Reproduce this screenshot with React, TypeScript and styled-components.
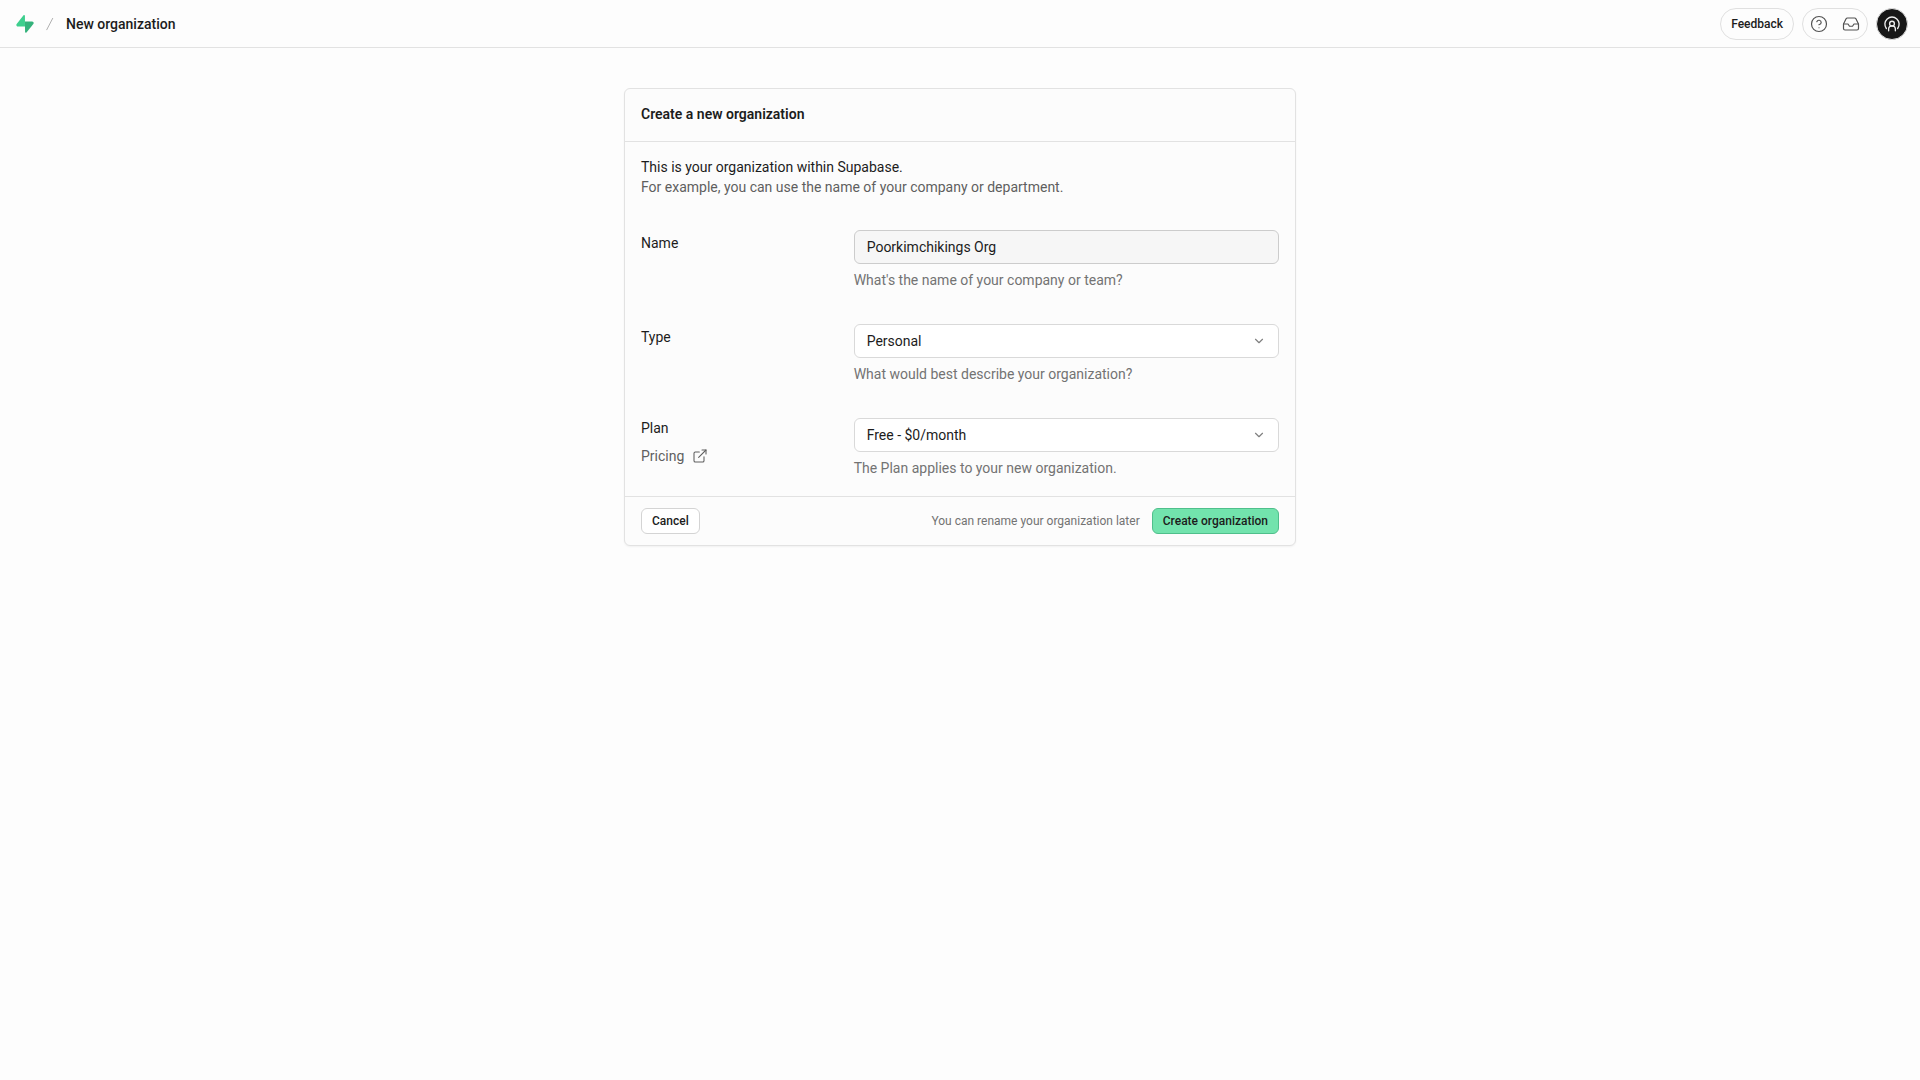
import React from "react";
import styled, { createGlobalStyle, css } from "styled-components";
import { ChevronDown, ExternalLink, CircleHelp, Inbox } from "lucide-react";

const GlobalStyle = createGlobalStyle`
  *, *::before, *::after { box-sizing: border-box; }
  body {
    margin: 0;
    background: #fdfdfd;
    color: #1c1c1c;
    font: 400 14px/20px Roboto, "Liberation Sans", sans-serif;
  }
  button, input, select { font: inherit; color: inherit; }
  h1, h2, p { margin: 0; font: inherit; }
`;

const TopBar = styled.header`
  display: flex;
  align-items: center;
  justify-content: space-between;
  height: 48px;
  padding: 0 12px 0 16px;
  border-bottom: 1px solid #e2e2e2;
`;

const Group = styled.div<{ $gap: number }>`
  display: flex;
  align-items: center;
  gap: ${({ $gap }) => $gap}px;
`;

const HomeLink = styled.a`
  display: flex;
`;

const PageTitle = styled.h1`
  && { font-weight: 500; }
`;

const pill = css`
  height: 32px;
  border: 1px solid #e0e0e0;
  border-radius: 16px;
  background: #fdfdfd;
`;

const FeedbackButton = styled.button`
  ${pill}
  padding: 0 10px;
  font-size: 12px;
  font-weight: 500;
`;

const IconPill = styled.div`
  ${pill}
  display: flex;
  overflow: hidden;
`;

const IconButton = styled.button`
  display: grid;
  place-items: center;
  width: 32px;
  padding: 0;
  border: 0;
  background: none;
  color: #525252;
`;

const Avatar = styled.button`
  display: grid;
  place-items: center;
  width: 32px;
  height: 32px;
  padding: 0;
  border: 1px solid #e0e0e0;
  border-radius: 50%;
  background: #171717;
  color: #ededed;
`;

const Main = styled.main`
  padding: 40px 16px;
`;

const Card = styled.form`
  max-width: 672px;
  margin: 0 auto;
  border: 1px solid #e2e2e2;
  border-radius: 6px;
  background: #fcfcfc;
  box-shadow: 0 1px 2px rgba(0, 0, 0, 0.05);
`;

const CardHeader = styled.div`
  padding: 15px 16px 17px;
  border-bottom: 1px solid #e2e2e2;
`;

const CardTitle = styled.h2`
  && { font-weight: 600; }
`;

const CardBody = styled.div`
  display: flex;
  flex-direction: column;
  gap: 33px;
  padding: 15px 16px 17px;
`;

const Muted = styled.p`
  color: #5f5f5f;
`;

const Row = styled.div`
  display: grid;
  grid-template-columns: 1fr 2fr;
`;

const LabelCell = styled.div<{ $tight?: boolean }>`
  display: flex;
  flex-direction: column;
  align-items: flex-start;
  gap: 8px;
  padding-top: ${({ $tight }) => ($tight ? 0 : 3)}px;
`;

const PricingLink = styled.a`
  display: flex;
  align-items: center;
  gap: 8px;
  color: #5f5f5f;
  text-decoration: none;
`;

const ControlCell = styled.div`
  display: flex;
  flex-direction: column;
  gap: 7px;
  padding-bottom: 2px;
`;

const control = css`
  width: 100%;
  height: 34px;
  padding: 0 12px;
  border: 1px solid #d9d9d9;
  border-radius: 6px;
  outline: none;
`;

const TextInput = styled.input`
  ${control}
  border-color: #cccccc;
  background: #f6f6f6;
`;

const SelectWrap = styled.div`
  display: grid;
  align-items: center;

  > * { grid-area: 1 / 1; }
  > svg {
    justify-self: end;
    margin-right: 13px;
    color: #808080;
    pointer-events: none;
  }
`;

const Select = styled.select`
  ${control}
  appearance: none;
  background: #ffffff;
`;

const Hint = styled.p`
  && { line-height: 18px; }
  color: #737373;
`;

const CardFooter = styled.div`
  display: flex;
  align-items: center;
  justify-content: space-between;
  padding: 11px 16px;
  border-top: 1px solid #e2e2e2;
`;

const FooterNote = styled.p`
  && { font-size: 12px; }
  color: #737373;
`;

const Button = styled.button<{ $primary?: boolean }>`
  height: 26px;
  padding: 0 10px;
  border: 1px solid ${({ $primary }) => ($primary ? "#4fbf8b" : "#d4d4d4")};
  border-radius: 6px;
  background: ${({ $primary }) => ($primary ? "#72e3ad" : "#ffffff")};
  font-size: 12px;
  line-height: 16px;
  font-weight: 500;
`;

const Logo = () => (
  <svg width="18" height="18" viewBox="0 0 109 113" aria-hidden="true">
    <path
      d="M63.7076 110.284C60.8481 113.885 55.0502 111.912 54.9813 107.314L53.9738 40.0627L99.1935 40.0627C107.384 40.0627 111.952 49.5228 106.859 55.9374L63.7076 110.284Z"
      fill="#34b27b"
    />
    <path
      d="M45.317 2.07103C48.1765 -1.53037 53.9745 0.442937 54.0434 5.041L54.4849 72.2922H9.83113C1.64038 72.2922 -2.92775 62.8321 2.1655 56.4175L45.317 2.07103Z"
      fill="#3ecf8e"
    />
  </svg>
);

const Slash = () => (
  <svg width="16" height="16" viewBox="0 0 24 24" fill="none" stroke="#b0b0b0" strokeWidth="1.5" strokeLinecap="round" aria-hidden="true">
    <path d="M16 3.549L7.12 20.600" />
  </svg>
);

const Person = () => (
  <svg width="18" height="18" viewBox="0 0 24 24" fill="none" stroke="currentColor" strokeWidth="1.8" strokeLinecap="round" aria-hidden="true">
    <path d="M4.500 18A9.500 9.500 0 1 1 19.500 18" />
    <circle cx="12" cy="11.500" r="3.200" />
    <path d="M7.500 21V19a4.500 4.500 0 0 1 9 0V21" />
  </svg>
);

function SelectField({ id, value, options }: { id: string; value: string; options: string[] }) {
  return (
    <SelectWrap>
      <Select id={id} defaultValue={value}>
        {options.map((option) => (
          <option key={option}>{option}</option>
        ))}
      </Select>
      <ChevronDown size={14} strokeWidth={2} />
    </SelectWrap>
  );
}

export default function App() {
  return (
    <>
      <GlobalStyle />
      <TopBar>
        <Group $gap={8}>
          <HomeLink href="#" aria-label="Home">
            <Logo />
          </HomeLink>
          <Slash />
          <PageTitle>New organization</PageTitle>
        </Group>
        <Group $gap={8}>
          <FeedbackButton type="button">Feedback</FeedbackButton>
          <IconPill>
            <IconButton type="button" aria-label="Help">
              <CircleHelp size={18} strokeWidth={1.6} />
            </IconButton>
            <IconButton type="button" aria-label="Inbox">
              <Inbox size={18} strokeWidth={1.6} />
            </IconButton>
          </IconPill>
          <Avatar type="button" aria-label="Account">
            <Person />
          </Avatar>
        </Group>
      </TopBar>
      <Main>
        <Card onSubmit={(event) => event.preventDefault()}>
          <CardHeader>
            <CardTitle>Create a new organization</CardTitle>
          </CardHeader>
          <CardBody>
            <div>
              <p>This is your organization within Supabase.</p>
              <Muted>For example, you can use the name of your company or department.</Muted>
            </div>
            <Row>
              <LabelCell>
                <label htmlFor="name">Name</label>
              </LabelCell>
              <ControlCell>
                <TextInput id="name" type="text" defaultValue="Poorkimchikings Org" />
                <Hint>What's the name of your company or team?</Hint>
              </ControlCell>
            </Row>
            <Row>
              <LabelCell>
                <label htmlFor="type">Type</label>
              </LabelCell>
              <ControlCell>
                <SelectField id="type" value="Personal" options={["Personal"]} />
                <Hint>What would best describe your organization?</Hint>
              </ControlCell>
            </Row>
            <Row>
              <LabelCell $tight>
                <label htmlFor="plan">Plan</label>
                <PricingLink href="#">
                  Pricing
                  <ExternalLink size={16} strokeWidth={1.6} />
                </PricingLink>
              </LabelCell>
              <ControlCell>
                <SelectField id="plan" value="Free - $0/month" options={["Free - $0/month"]} />
                <Hint>The Plan applies to your new organization.</Hint>
              </ControlCell>
            </Row>
          </CardBody>
          <CardFooter>
            <Button type="button">Cancel</Button>
            <Group $gap={12}>
              <FooterNote>You can rename your organization later</FooterNote>
              <Button type="submit" $primary>
                Create organization
              </Button>
            </Group>
          </CardFooter>
        </Card>
      </Main>
    </>
  );
}
